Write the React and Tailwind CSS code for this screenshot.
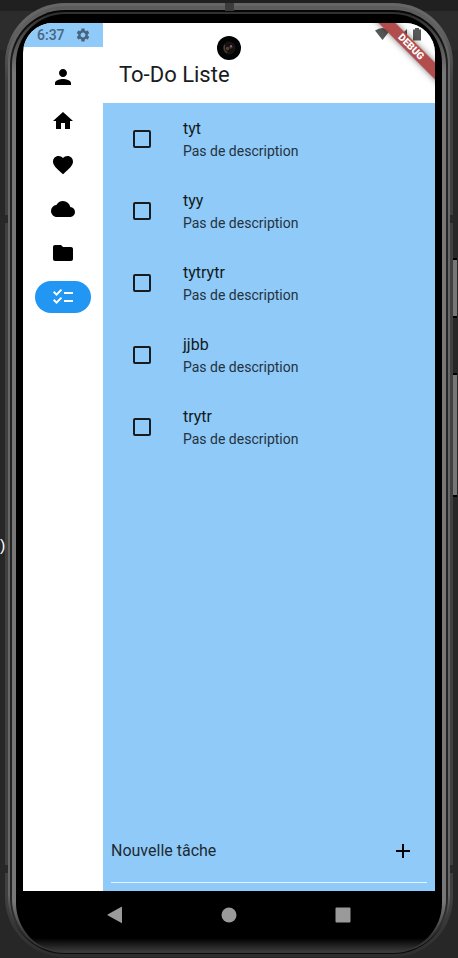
import React, { useState } from "react";
import {
  MdPerson,
  MdHome,
  MdFavorite,
  MdCloud,
  MdFolder,
  MdChecklist,
  MdSettings,
  MdAdd,
} from "react-icons/md";

const sections = [
  { label: "Profil", Icon: MdPerson },
  { label: "Accueil", Icon: MdHome },
  { label: "Favoris", Icon: MdFavorite },
  { label: "Nuage", Icon: MdCloud },
  { label: "Dossiers", Icon: MdFolder },
  { label: "Tâches", Icon: MdChecklist },
];

const initialTasks = ["tyt", "tyy", "tytrytr", "jjbb", "trytr"];

function Sidebar() {
  return (
    <aside className="flex w-20 shrink-0 flex-col bg-white">
      <div className="flex h-6 items-center gap-2.5 bg-[#90caf9] pl-3.5 text-sm font-medium text-[#48657d]">
        <span>6:37</span>
        <MdSettings size={16} />
      </div>
      <nav className="flex flex-col items-center gap-3 pt-3.5">
        {sections.map(({ label, Icon }) => (
          <button
            key={label}
            type="button"
            aria-label={label}
            className={
              label === "Tâches"
                ? "flex h-8 w-14 items-center justify-center rounded-full bg-[#2196f3] text-white"
                : "flex h-8 w-14 items-center justify-center rounded-full text-black"
            }
          >
            <Icon size={24} />
          </button>
        ))}
      </nav>
    </aside>
  );
}

function Task({ name, index }) {
  const id = `task-${index}`;
  return (
    <li className="flex h-18 items-center pl-[30px]">
      <input
        id={id}
        type="checkbox"
        className="size-[18px] shrink-0 appearance-none rounded-xs border-2 border-[#171c20] checked:bg-[#2196f3]"
      />
      <label htmlFor={id} className="ml-8 flex flex-col">
        <span className="text-base leading-6 text-[#111a20]">{name}</span>
        <span className="text-sm leading-5 text-[#24323d]">Pas de description</span>
      </label>
    </li>
  );
}

function StatusIcons() {
  return (
    <svg
      className="absolute top-0 right-0 h-6 w-16"
      viewBox="0 0 64 24"
      fill="#585858"
      aria-hidden="true"
    >
      <path d="M4 7.5 Q11.500 2.500 19 7.500 L11.500 17 Z" />
      <path d="M36 6 V17 H25 Z" />
      <path d="M42 6.500 H44 V5 H48 V6.500 H50 V17.500 H42 Z" />
    </svg>
  );
}

function DebugBanner() {
  return (
    <div className="absolute top-[18px] -right-6 flex h-3 w-24 rotate-45 items-center justify-center bg-[#ad4343]/95 text-[10px] leading-3 font-black text-white shadow-[0_0_6px_rgba(0,0,0,0.5)]">
      DEBUG
    </div>
  );
}

function Camera() {
  return (
    <svg
      className="absolute top-[13px] left-1/2 size-6 -translate-x-1/2"
      viewBox="0 0 24 24"
      aria-hidden="true"
    >
      <circle cx="12" cy="12" r="12" fill="#030303" />
      <circle cx="12" cy="12" r="6.500" fill="#151515" />
      <path d="M7 9 A6 6 0 0 0 10 17 L11 15 A4 4 0 0 1 8.500 9 Z" fill="#444" />
      <circle cx="12" cy="12" r="4" fill="#17100d" />
      <circle cx="10.500" cy="12.500" r="1.800" fill="#5c431e" />
      <circle cx="14" cy="11" r="1.600" fill="#54354f" />
      <circle cx="14" cy="10" r="0.800" fill="#c19abc" />
    </svg>
  );
}

function AndroidBar() {
  return (
    <div className="flex h-12 items-center justify-around bg-black px-[35px] text-[#9a9a9a]">
      <button type="button" aria-label="Retour">
        <svg className="size-[18px]" viewBox="0 0 18 18" fill="currentColor">
          <path d="M15.500 .7 Q16 .5 16 1.500 V16.500 Q16 17.500 15.500 17 L2 9.600 Q.5 9 2 8.200 Z" />
        </svg>
      </button>
      <button type="button" aria-label="Écran d'accueil">
        <svg className="size-[18px]" viewBox="0 0 18 18" fill="currentColor">
          <circle cx="9" cy="9" r="7.500" />
        </svg>
      </button>
      <button type="button" aria-label="Applications récentes">
        <svg className="size-[18px]" viewBox="0 0 18 18" fill="currentColor">
          <rect x="1.500" y="1.500" width="15" height="15" rx="1" />
        </svg>
      </button>
    </div>
  );
}

function Screen() {
  const [tasks, setTasks] = useState(initialTasks);
  const [draft, setDraft] = useState("");

  function addTask(event) {
    event.preventDefault();
    if (draft.trim()) {
      setTasks([...tasks, draft.trim()]);
      setDraft("");
    }
  }

  return (
    <div className="relative flex flex-1 flex-col overflow-hidden rounded-[30px] bg-black">
      <div className="flex flex-1">
        <Sidebar />
        <main className="flex min-w-0 flex-1 flex-col bg-[#90caf9]">
          <header className="flex h-20 items-center bg-white pt-6 pl-4">
            <h1 className="text-[22px] leading-7 text-[#191c20]">To-Do Liste</h1>
          </header>
          <ul className="flex-1">
            {tasks.map((name, index) => (
              <Task key={index} name={name} index={index} />
            ))}
          </ul>
          <form
            onSubmit={addTask}
            className="mx-2 mb-2 flex h-16 items-center border-b border-[#e3f2fd]"
          >
            <input
              type="text"
              aria-label="Nouvelle tâche"
              placeholder="Nouvelle tâche"
              value={draft}
              onChange={(event) => setDraft(event.target.value)}
              className="min-w-0 flex-1 bg-transparent text-base text-[#1d2a33] outline-none placeholder:text-[#1d2a33]"
            />
            <button
              type="submit"
              aria-label="Ajouter"
              className="flex size-12 items-center justify-center text-black"
            >
              <MdAdd size={24} />
            </button>
          </form>
        </main>
      </div>
      <AndroidBar />
      <StatusIcons />
      <DebugBanner />
      <Camera />
    </div>
  );
}

export default function App() {
  return (
    <div className="relative flex min-h-screen flex-col bg-[#282828] bg-[linear-gradient(#202020_11px,#2c2c2c_11px,#2c2c2c_50px,#272727_50px)] pt-[3px] pr-[5px] pb-px pl-[5px] font-[Roboto,sans-serif]">
      <div className="absolute top-[258px] right-px h-[60px] w-1 border-y-2 border-black bg-[#777]" />
      <div className="absolute top-[373px] right-px h-[124px] w-1 border-y-2 border-black bg-[#777]" />
      <div className="relative flex flex-1 flex-col rounded-[60px] bg-[linear-gradient(#666_20px,#404040_80px,#404040_calc(100%-60px),#2e2e2e)] p-[3px]">
        <div className="absolute inset-x-0 top-[212px] h-2 bg-[#292929]" />
        <div className="absolute inset-x-0 bottom-[84px] h-2 bg-[#292929]" />
        <div className="relative flex flex-1 flex-col rounded-[57px] bg-[linear-gradient(#5c5c5c,#666_60px,#666_calc(100%-60px),#0c0c0c_calc(100%-8px))] px-0.5 pt-1 pb-px">
          <div className="flex flex-1 flex-col rounded-[55px] bg-[linear-gradient(#050505,#242424_60px,#242424_calc(100%-60px),#3a3a3a)] px-0.5 pt-0.5 pb-px">
            <div className="flex flex-1 flex-col rounded-[53px] bg-[linear-gradient(#303030_4px,#777_60px,#777_calc(100%-50px),#333_calc(100%-14px))] px-1 pt-0.5">
              <div className="flex flex-1 flex-col rounded-[49px] bg-[linear-gradient(to_top,#3c3c3c,#000_14px)] px-[7px] pt-[9px] pb-[13px]">
                <Screen />
              </div>
            </div>
          </div>
        </div>
        <div className="absolute top-0 left-[220px] h-2 w-[9px] bg-[#3c3c3c]" />
      </div>
      <span className="absolute top-[536px] left-0 font-[Liberation_Sans,sans-serif] text-base leading-5 text-white">
        )
      </span>
    </div>
  );
}
